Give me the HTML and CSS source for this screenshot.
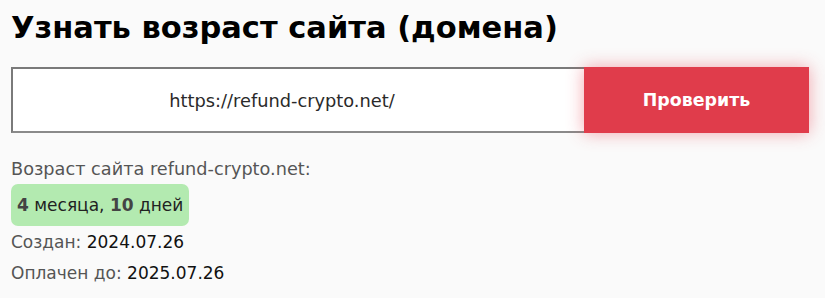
FILE: index.html
```html
<!DOCTYPE html>
<html lang="ru">
<head>
<meta charset="utf-8">
<title>Узнать возраст сайта</title>
<link rel="stylesheet" href="styles.css">
</head>
<body>
<main class="page">
  <h1 class="title">Узнать возраст сайта (домена)</h1>
  <form class="check">
    <input class="check-input" type="text" value="https://refund-crypto.net/">
    <button class="check-btn" type="button">Проверить</button>
  </form>
  <section class="result">
    <p class="label">Возраст сайта refund-crypto.net:</p>
    <div class="age"><b>4</b> месяца, <b>10</b> дней</div>
    <p class="row">Создан: <span class="val">2024.07.26</span></p>
    <p class="row">Оплачен до: <span class="val">2025.07.26</span></p>
  </section>
</main>
</body>
</html>
```
FILE: styles.css
```css
html, body {
  margin: 0;
  padding: 0;
  background: #fafafa;
}
body {
  font-family: "DejaVu Sans", "Noto Sans", sans-serif;
  color: #222;
}
.page {
  padding: 0 11px;
}
.title {
  margin: 0;
  padding-top: 8px;
  font-size: 30.5px;
  line-height: 40px;
  font-weight: 700;
  color: #000;
}
.check {
  display: flex;
  margin-top: 19px;
  width: 798px;
  height: 66px;
}
.check-input {
  box-sizing: border-box;
  width: 573px;
  height: 66px;
  margin: 0;
  padding: 0 33px 0 0;
  border: 2px solid #7a7a7a;
  border-bottom-color: #8a8a8a;
  border-right: none;
  background: #fff;
  font-family: inherit;
  font-size: 17.8px;
  color: #2a2a2a;
  text-align: center;
  outline: none;
}
.check-btn {
  box-sizing: border-box;
  width: 225px;
  height: 66px;
  margin: 0;
  border: none;
  background: #e03c4b;
  color: #fff;
  font-family: inherit;
  font-size: 17.4px;
  font-weight: 700;
  box-shadow: 0 0 16px rgba(230, 60, 75, 0.45);
}
.result {
  margin-top: 24px;
  font-size: 17px;
}
.label {
  margin: 0;
  line-height: 24px;
  font-size: 17.7px;
  color: #555;
}
.age {
  display: inline-block;
  margin-top: 3px;
  padding: 0 6px;
  height: 42px;
  line-height: 42px;
  border-radius: 7px;
  background: #b3eab0;
  color: #222;
  font-size: 17px;
  font-weight: 500;
}
.age b {
  color: #444;
  font-weight: 700;
}
.row {
  margin: 4px 0 0;
  line-height: 24px;
  color: #555;
}
.row + .row {
  margin-top: 7px;
}
.val {
  color: #111;
}
```
